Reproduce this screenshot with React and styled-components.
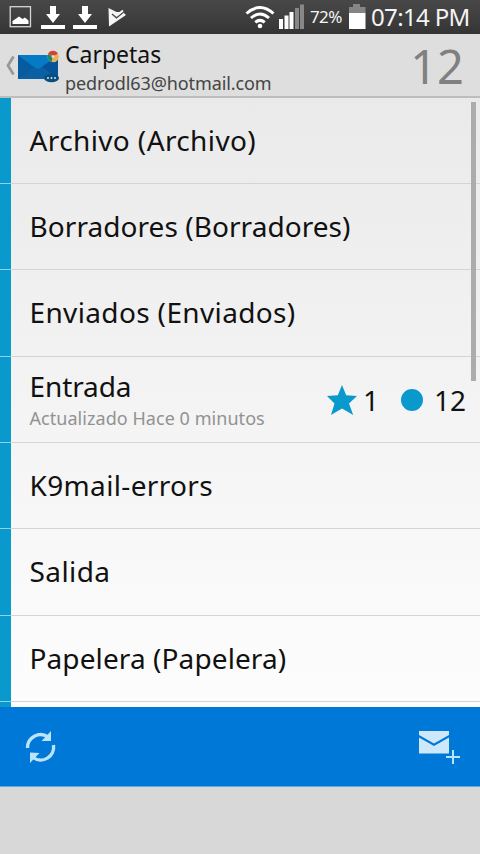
import React from "react";
import styled, { createGlobalStyle } from "styled-components";

const GlobalStyle = createGlobalStyle`
  * { box-sizing: border-box; }
  body { margin: 0; background: #d8d8d8; }
`;

const Screen = styled.main`
  width: 480px;
  height: 854px;
  display: flex;
  flex-direction: column;
  overflow: hidden;
  background: #d8d8d8;
  font-family: "Noto Sans", sans-serif;
  color: #111;
`;

const StatusBar = styled.header`
  height: 34px;
  flex: none;
  display: flex;
  align-items: center;
  justify-content: space-between;
  background: linear-gradient(#484848, #3d3d3d 60%, #343434);
  color: #f4f4f4;
`;

const StatusGroup = styled.div`
  display: flex;
  align-items: center;
  height: 34px;
`;

const Glyph = styled.svg`
  display: block;
  flex: none;
  width: ${(p) => p.$w}px;
  height: ${(p) => p.$h}px;
`;

const Label = styled.span`
  display: block;
  flex: none;
  white-space: nowrap;
  font-size: ${(p) => p.$size}px;
  line-height: ${(p) => p.$line}px;
  letter-spacing: ${(p) => p.$track || 0}px;
  color: ${(p) => p.$color || "inherit"};
`;

const Percent = styled(Label)`
  width: 39px;
  margin-left: 5px;
`;

const Clock = styled(Label)`
  width: 109px;
  margin-left: 4px;
`;

const ActionBar = styled.header`
  height: 64px;
  flex: none;
  display: flex;
  align-items: center;
  padding-right: 16px;
  background: #dedede;
  border-bottom: 2px solid #bdbdbd;
`;

const Heading = styled.div`
  flex: 1;
  display: flex;
  flex-direction: column;
  padding: 5px 0 0 3px;
`;

const BigCount = styled(Label)`
  padding-top: 1px;
`;

const ListArea = styled.section`
  position: relative;
  flex: none;
  height: 609px;
  overflow: hidden;
  background: linear-gradient(#eaeaea, #fdfdfd);
`;

const Row = styled.div`
  height: ${(p) => p.$h}px;
  display: flex;
  align-items: center;
  justify-content: space-between;
  border-left: 11px solid #0a99cc;
  padding: 0 13px 0 18.5px;
  background: linear-gradient(#d2d4d5, #d2d4d5) bottom / 100% 1px no-repeat;
`;

const Accent = styled.div`
  position: absolute;
  left: 0;
  top: ${(p) => p.$top}px;
  width: 11px;
  height: 1px;
  background: #8ed3ea;
`;

const RowText = styled.div`
  display: flex;
  flex-direction: column;
  padding-top: ${(p) => p.$drop || 0}px;
  padding-bottom: ${(p) => p.$lift || 0}px;
`;

const Counts = styled.div`
  display: flex;
  align-items: center;
`;

const CountValue = styled(Label)`
  width: ${(p) => p.$w}px;
  margin-left: ${(p) => p.$gap}px;
`;

const Dot = styled.span`
  width: 22px;
  height: 22px;
  border-radius: 50%;
  background: #0a99cc;
`;

const ScrollThumb = styled.div`
  position: absolute;
  top: 4px;
  right: 4px;
  width: 5px;
  height: 279px;
  background: #acacac;
`;

const Toolbar = styled.footer`
  height: 80px;
  flex: none;
  display: flex;
  align-items: center;
  justify-content: space-between;
  padding: 0 19px 0 24px;
  background: #0078d7;
  border-bottom: 1px solid #62a9de;
`;

const folders = [
  { name: "Archivo (Archivo)", h: 86, track: 0.38 },
  { name: "Borradores (Borradores)", h: 86, track: 0.06 },
  { name: "Enviados (Enviados)", h: 87, track: 0.36 },
  { name: "Entrada", h: 86, track: -0.1, note: "Actualizado Hace 0 minutos" },
  { name: "K9mail-errors", h: 86, track: 0.35 },
  { name: "Salida", h: 87, track: 0.4 },
  { name: "Papelera (Papelera)", h: 86, track: 0.1 },
  { name: "", h: 20, track: 0 },
];

const dividers = [85, 171, 258, 344, 430, 517, 603];

function NotificationIcons() {
  return (
    <Glyph $w={140} $h={34} viewBox="0 0 140 34">
      <rect x="10.200" y="6.700" width="20.300" height="20" fill="none" stroke="#d6d6d6" strokeWidth="1.300" />
      <path d="M12.500 24v-3l3-2 3.500-2.500 3.500 2.500 2.500-1.500 3.500 3V24z" fill="#fff" />
      {[0, 32].map((x) => (
        <path key={x} transform={`translate(${x} 0)`} d="M50 6h6v8h4l-7 9-7-9h4zM41 25h24v4H41z" fill="#fff" />
      ))}
      <path d="M108.500 8l8 4 6.500 0 3 3L109 26.500z" fill="#f5f5f5" />
      <path d="M112 14l4.500 3.800 8.500-6.800" fill="none" stroke="#484848" strokeWidth="1.300" />
      <path d="M116.500 15.500l6.500-5" fill="none" stroke="#f5f5f5" strokeWidth="2" />
    </Glyph>
  );
}

function SignalIcons() {
  return (
    <Glyph $w={60} $h={34} viewBox="244 0 60 34">
      <g fill="none" stroke="#fff" strokeWidth="3">
        <path d="M245.500 13.500q13.500-12 27 0" />
        <path d="M250 18q9-8 18 0" />
        <path d="M254.300 22.400q4.700-4 9.400 0" />
      </g>
      <circle cx="259" cy="26" r="2.300" fill="#fff" />
      <path d="M278 19h4v10h-4zM283.500 15.500h4V29h-4zM288.500 12h4v17h-4z" fill="#fff" />
      <path d="M294 8h4v21h-4zM299 4.500h4V29h-4z" fill="#888" />
    </Glyph>
  );
}

function MailLogo() {
  return (
    <Glyph $w={62} $h={62} viewBox="0 34 62 62">
      <path d="M13.500 56.500L8 65.500l5.500 9" fill="none" stroke="#999" strokeWidth="2.800" />
      <rect x="18" y="55" width="40" height="24" fill="#0874bd" />
      <path d="M18 55l17 13-17 11z" fill="#075c9f" />
      <path d="M58 55L40 68l18 11z" fill="#07539a" />
      <path d="M18 79l17-13q3-2 6 0l17 13z" fill="#0960a3" />
      <path d="M18 55h40L40 68q-2 1.500-4 0z" fill="#077ac6" />
      <circle cx="53" cy="56.500" r="5.500" fill="#eee" />
      <path d="M53 56.500l-5-2.500a5.500 5.500 0 0 1 10 0z" fill="#d64234" />
      <path d="M53 56.500l-5-2.500a5.500 5.500 0 0 0 4 8z" fill="#278454" />
      <path d="M53 56.500l5-2.500a5.500 5.500 0 0 1-6 8z" fill="#e8b154" />
      <circle cx="53" cy="56.500" r="1.500" fill="#ddd" />
      <ellipse cx="51.500" cy="78" rx="7.500" ry="4.300" fill="#0b4d7d" />
      <g fill="#c0e5fa"><circle cx="48" cy="78" r="1" /><circle cx="51.500" cy="78" r="1" /><circle cx="55" cy="78" r="1" /></g>
    </Glyph>
  );
}

export default function App() {
  return (
    <Screen>
      <GlobalStyle />
      <StatusBar>
        <StatusGroup><NotificationIcons /></StatusGroup>
        <StatusGroup>
          <SignalIcons />
          <Percent $size={17} $line={34} $track={-0.6}>72%</Percent>
          <Glyph $w={18} $h={34} viewBox="349 0 18 34">
            <path d="M353 4h7v3h5.500v6H349V7h4z" fill="#858585" />
            <path d="M349 13h16.500v16H349z" fill="#fff" />
          </Glyph>
          <Clock $size={24} $line={34} $track={-0.65}>07:14 PM</Clock>
        </StatusGroup>
      </StatusBar>
      <ActionBar>
        <MailLogo />
        <Heading>
          <Label $size={23} $line={31}>Carpetas</Label>
          <Label $size={18} $line={27} $track={-0.1} $color="#444">pedrodl63@hotmail.com</Label>
        </Heading>
        <BigCount $size={47} $line={62} $color="#808080">12</BigCount>
      </ActionBar>
      <ListArea>
        {folders.map((f) => (
          <Row key={f.name || "next"} $h={f.h}>
            <RowText $lift={f.note ? 0 : 2} $drop={f.note ? 1 : 0}>
              <Label $size={28} $line={35} $track={f.track}>{f.name}</Label>
              {f.note && <Label $size={18} $line={29} $track={0.05} $color="#929292">{f.note}</Label>}
            </RowText>
            {f.note && (
              <Counts>
                <Glyph $w={30} $h={30} viewBox="0 0 30 30">
                  <path d="M15 0l4.200 10.300L30 11l-8 7.500 4.200 11.500L15 23.500 4 30l3.500-11.500L0 11l10.800-.7z" fill="#0a99cc" />
                </Glyph>
                <CountValue $w={38} $gap={6.5} $size={28} $line={36}>1</CountValue>
                <Dot />
                <CountValue $w={33} $gap={11} $size={28} $line={36}>12</CountValue>
              </Counts>
            )}
          </Row>
        ))}
        {dividers.map((y) => <Accent key={y} $top={y} />)}
        <ScrollThumb />
      </ListArea>
      <Toolbar>
        <Glyph $w={34} $h={34} viewBox="0 0 34 34">
          <g fill="none" stroke="#b9e4fc" strokeWidth="3.400">
            <path d="M3.500 18A13 13 0 0 1 24 7" />
            <path d="M29.500 15A13 13 0 0 1 9 27.500" />
          </g>
          <path d="M27 1v10H17.500zM6 33V22.500l9.500.5z" fill="#b9e4fc" />
        </Glyph>
        <Glyph $w={42} $h={36} viewBox="0 0 42 36">
          <path d="M0 2h30v4L15 14.500 0 6zM0 8.500l15 8.500 15-8.500V24.500H0z" fill="#cce8fa" />
          <path d="M34 21v14M27 28h14" stroke="#b9e4fc" strokeWidth="2" fill="none" />
        </Glyph>
      </Toolbar>
    </Screen>
  );
}
